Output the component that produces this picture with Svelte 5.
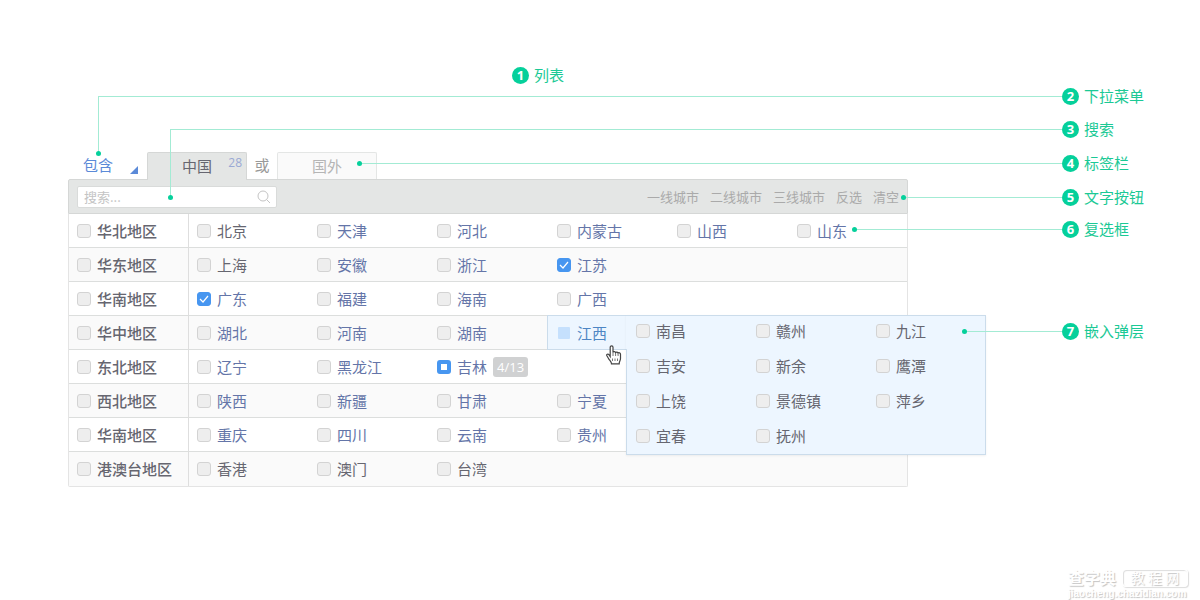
<script lang="ts">
	type City = {
		name: string;
		plain?: boolean;
		checked?: boolean;
		partial?: string;
		children?: string[];
	};
	type Region = { name: string; cities: City[] };

	const plain = (...names: string[]): City[] => names.map((name) => ({ name, plain: true }));
	const linked = (...names: string[]): City[] => names.map((name) => ({ name }));

	let regions = $state<Region[]>([
		{ name: '华北地区', cities: [...plain('北京'), ...linked('天津', '河北', '内蒙古', '山西', '山东')] },
		{
			name: '华东地区',
			cities: [...plain('上海'), ...linked('安徽', '浙江'), { name: '江苏', checked: true }]
		},
		{
			name: '华南地区',
			cities: [{ name: '广东', checked: true }, ...linked('福建', '海南', '广西')]
		},
		{
			name: '华中地区',
			cities: [
				...linked('湖北', '河南', '湖南'),
				{
					name: '江西',
					children: ['南昌', '赣州', '九江', '吉安', '新余', '鹰潭', '上饶', '景德镇', '萍乡', '宜春', '抚州']
				}
			]
		},
		{
			name: '东北地区',
			cities: [...linked('辽宁', '黑龙江'), { name: '吉林', partial: '4/13' }]
		},
		{ name: '西北地区', cities: linked('陕西', '新疆', '甘肃', '宁夏') },
		{ name: '华南地区', cities: linked('重庆', '四川', '云南', '贵州') },
		{ name: '港澳台地区', cities: plain('香港', '澳门', '台湾') }
	]);

	const COLUMNS = 6;
	const actions = ['一线城市', '二线城市', '三线城市', '反选', '清空'];

	// x/y is the corner of the leader line, drop is how far it runs down
	const callouts = [
		{ n: 2, label: '下拉菜单', x: 98, y: 96, drop: 57 },
		{ n: 3, label: '搜索', x: 170, y: 129, drop: 68 },
		{ n: 4, label: '标签栏', x: 359, y: 163, drop: 0 },
		{ n: 5, label: '文字按钮', x: 903, y: 197, drop: 0 },
		{ n: 6, label: '复选框', x: 854, y: 229, drop: 0 },
		{ n: 7, label: '嵌入弹层', x: 964, y: 331, drop: 0 }
	];

	let tab = $state('中国');
	let mode = $state('包含');
	let query = $state('');
</script>

<main class="stage">
	<section class="picker">
		<div class="tabs">
			<label class="mode">
				<select bind:value={mode} aria-label="包含">
					<option>包含</option>
				</select>
			</label>
			<button class="tab" class:active={tab === '中国'} onclick={() => (tab = '中国')}>
				中国<span class="count">28</span>
			</button>
			<span class="or">或</span>
			<button class="tab" class:active={tab === '国外'} onclick={() => (tab = '国外')}>国外</button>
		</div>

		<div class="toolbar">
			<label class="search">
				<input type="text" placeholder="搜索..." aria-label="搜索" bind:value={query} />
				<svg width="14" height="14" viewBox="0 0 14 14" fill="none" stroke="#c4c4c4">
					<circle cx="6" cy="6" r="5" />
					<path d="M9.6 9.6 13 13" />
				</svg>
			</label>
			<div class="actions">
				{#each actions as action}
					<button>{action}</button>
				{/each}
			</div>
		</div>

		<table>
			<tbody>
				{#each regions as region}
					<tr>
						<th scope="row">
							<label class="check"><input type="checkbox" />{region.name}</label>
						</th>
						{#each Array(COLUMNS) as _, i}
							{@const city = region.cities[i]}
							<td>
								{#if city?.children}
									<div class="open">
										<label class="check"><input type="checkbox" />{city.name}</label>
										<div class="popup">
											{#each city.children as child}
												<label class="check"><input type="checkbox" />{child}</label>
											{/each}
										</div>
										<svg class="cursor" width="16" height="20" viewBox="0 0 16 20">
											<path
												d="M4.2 11.5V2.3c0-1.9 2.8-1.9 2.8 0v5c.3-1.1 2.4-1 2.6.3.5-.9 2.3-.7 2.5.5.6-.7 2.4-.4 2.4 1.1v4.3c0 2.2-1.3 3-1.3 5.3H5.5c0-2.2-2-3.3-3-5.3L.9 10.8c-.8-1.5 1.1-2.4 2-1.2z"
												fill="#fff"
												stroke="#444"
												stroke-width="1.2"
											/>
											<path d="M7 7v4M9.6 8v3M12.1 8.8V11M6.5 13.5V16M9 13.5V16M11.5 13.5V16" fill="none" stroke="#777" />
										</svg>
									</div>
								{:else if city}
									<label class="check" class:plain={city.plain}>
										<input type="checkbox" checked={city.checked} indeterminate={!!city.partial} />
										{city.name}
										{#if city.partial}<span class="ratio">{city.partial}</span>{/if}
									</label>
								{/if}
							</td>
						{/each}
					</tr>
				{/each}
			</tbody>
		</table>
	</section>

	<div class="callout title"><span class="num">1</span>列表</div>
	{#each callouts as c (c.n)}
		<div class="callout" style:left="{c.x}px" style:top="{c.y}px">
			<span class="lead" class:bent={c.drop > 0} style:height="{c.drop}px"></span>
			<span class="text"><span class="num">{c.n}</span>{c.label}</span>
		</div>
	{/each}

	<footer>
		<div class="brand"><b>查字典</b><span>教 程 网</span></div>
		<div class="url">jiaocheng.chazidian.com</div>
	</footer>
</main>

<style>
	:global(body) {
		background: #fff;
	}
	.stage {
		position: relative;
		box-sizing: border-box;
		padding: 152px 0 0 68px;
		font: 15px/20px 'Noto Sans CJK SC', sans-serif;
		color: #666670;
	}
	button,
	input,
	select {
		margin: 0;
		font: inherit;
		color: inherit;
	}
	button {
		padding: 0;
		border: 0;
		background: none;
		cursor: pointer;
	}
	.picker {
		max-width: 840px;
	}

	.tabs {
		display: flex;
		height: 27px;
	}
	.mode {
		position: relative;
		width: 79px;
	}
	.mode select {
		appearance: none;
		width: 100%;
		height: 26px;
		padding: 0 0 0 15px;
		border: 0;
		background: none;
		color: #5b8ad8;
	}
	.mode::after {
		content: '';
		position: absolute;
		right: 9px;
		bottom: 5px;
		border: 4px solid;
		border-color: transparent #5b8ad8 #5b8ad8 transparent;
	}
	.tab {
		position: relative;
		box-sizing: border-box;
		width: 100px;
		height: 27px;
		padding-bottom: 1px;
		border: 1px solid #e4e6e5;
		border-bottom: 0;
		border-radius: 2px 2px 0 0;
		background: #fafafa;
		color: #b5b5b5;
	}
	.tab.active {
		height: 28px;
		padding-bottom: 2px;
		border-color: #d5d7d6;
		background: #e4e6e5;
		color: #666670;
		z-index: 1;
	}
	.count {
		position: absolute;
		top: 0;
		right: 4px;
		font-family: 'Open Sans', sans-serif;
		font-size: 12px;
		color: #9aa9d4;
	}
	.or {
		width: 30px;
		line-height: 25px;
		text-align: center;
		color: #999;
	}

	.toolbar {
		box-sizing: border-box;
		display: flex;
		justify-content: space-between;
		align-items: center;
		height: 35px;
		padding: 0 8px;
		border: 1px solid #d5d7d6;
		border-radius: 2px 2px 0 0;
		background: #e4e6e5;
	}
	.search {
		box-sizing: border-box;
		display: flex;
		align-items: center;
		width: 200px;
		height: 22px;
		padding: 0 5px 0 6px;
		border: 1px solid #d9dbda;
		border-radius: 2px;
		background: #fff;
	}
	.search input {
		flex: 1;
		min-width: 0;
		padding: 0;
		border: 0;
		outline: 0;
		background: none;
		font-size: 13px;
	}
	.search input::placeholder {
		color: #c4c4c4;
	}
	.actions {
		display: flex;
		gap: 11px;
		font-size: 13px;
		color: #aaa;
	}

	table {
		width: 100%;
		table-layout: fixed;
		border: 1px solid #e4e4e4;
		border-top: 0;
		border-radius: 0 0 2px 2px;
		border-spacing: 0;
	}
	th,
	td {
		box-sizing: border-box;
		height: 34px;
		padding: 0 0 0 8px;
		border-bottom: 1px solid #dcdedd;
		text-align: left;
	}
	th,
	td:not(:last-child) {
		width: 120px;
	}
	th {
		border-right: 1px solid #dedede;
		font-weight: 500;
	}
	tr:nth-child(even) > * {
		background: #fafafa;
	}
	tr:last-child > * {
		border-bottom: 0;
	}
	.check {
		display: flex;
		align-items: center;
		gap: 6px;
		white-space: nowrap;
	}
	td .check {
		color: #6475a8;
	}
	td .check.plain,
	.popup .check {
		color: #666670;
	}
	.check input {
		appearance: none;
		flex: none;
		box-sizing: border-box;
		width: 14px;
		height: 14px;
		border: 1px solid #d3d3d3;
		border-radius: 3px;
		background: #eee;
	}
	.check input:checked {
		border-color: #4796f0;
		background: #4796f0
			url("data:image/svg+xml,%3Csvg xmlns='http://www.w3.org/2000/svg' viewBox='0 0 12 12'%3E%3Cpath d='M2 6l3 3 5-6' fill='none' stroke='%23fff' stroke-width='1.2'/%3E%3C/svg%3E");
	}
	.check input:indeterminate {
		border: 4px solid #4796f0;
		background: #fff;
	}
	.ratio {
		padding: 0 4px;
		border-radius: 3px;
		background: #d0d1d2;
		color: #fff;
		font-family: 'Open Sans', sans-serif;
		font-size: 13px;
	}

	.open {
		position: relative;
		box-sizing: border-box;
		display: flex;
		width: 80px;
		height: 35px;
		margin: -1px 0 -1px -10px;
		padding-left: 10px;
		border: 1px solid #cbdceb;
		border-right: 0;
		background: #edf6ff;
	}
	.open > .check {
		gap: 7px;
		color: #4d86c4;
	}
	.open > .check input {
		width: 12px;
		height: 12px;
		border: 0;
		border-radius: 1px;
		background: #c5e0fd;
	}
	.popup {
		position: absolute;
		top: -1px;
		left: 78px;
		z-index: 1;
		box-sizing: border-box;
		display: grid;
		grid-template-columns: repeat(3, 120px);
		grid-auto-rows: 35px;
		align-content: end;
		width: 360px;
		height: 140px;
		padding: 0 0 1px 9px;
		border: 1px solid #cbdceb;
		background: #edf6ff;
		box-shadow: 0 1px 2px rgba(0, 0, 0, 0.06);
	}
	/* hides the popup edge where it joins the open cell */
	.popup::before {
		content: '';
		position: absolute;
		top: 0;
		left: -1px;
		width: 1px;
		height: 33px;
		background: #edf6ff;
	}
	.cursor {
		position: absolute;
		top: 29px;
		left: 58px;
		z-index: 2;
	}

	.callout {
		position: absolute;
		right: 0;
		z-index: 3;
		display: flex;
		color: #1bc995;
		pointer-events: none;
	}
	.callout.title {
		top: 65px;
		left: 512px;
		align-items: center;
	}
	.lead {
		position: relative;
		flex: 1;
		border-top: 1px solid #a3ebd4;
	}
	.lead.bent {
		border-left: 1px solid #a3ebd4;
	}
	.lead::after {
		content: '';
		position: absolute;
		bottom: -2px;
		left: -2px;
		width: 5px;
		height: 5px;
		border-radius: 50%;
		background: #05d09b;
	}
	.lead.bent::after {
		left: -3px;
	}
	.text {
		display: flex;
		align-items: center;
		width: 138px;
		height: 20px;
		margin-top: -10px;
	}
	.num {
		width: 17px;
		margin-right: 5px;
		border-radius: 50%;
		background: #05d09b;
		color: #fff;
		font: bold 13px/17px 'Open Sans', sans-serif;
		text-align: center;
	}

	footer {
		width: 120px;
		margin: 82px 12px 0 auto;
		color: #fff;
		text-shadow: 1px 1px 1px #c4c4c4;
		white-space: nowrap;
	}
	.brand {
		display: flex;
		justify-content: space-between;
		height: 18px;
		line-height: 18px;
	}
	.brand b {
		font-size: 16px;
		line-height: 16px;
	}
	.brand span {
		box-sizing: border-box;
		width: 66px;
		border: 1px solid #fff;
		border-radius: 4px;
		box-shadow: 1px 1px 1px #ddd, inset 1px 1px 1px #ddd;
		font-size: 14px;
		line-height: 15px;
		text-align: center;
	}
	.url {
		font: bold 10px/13px 'Liberation Sans', sans-serif;
	}
</style>
